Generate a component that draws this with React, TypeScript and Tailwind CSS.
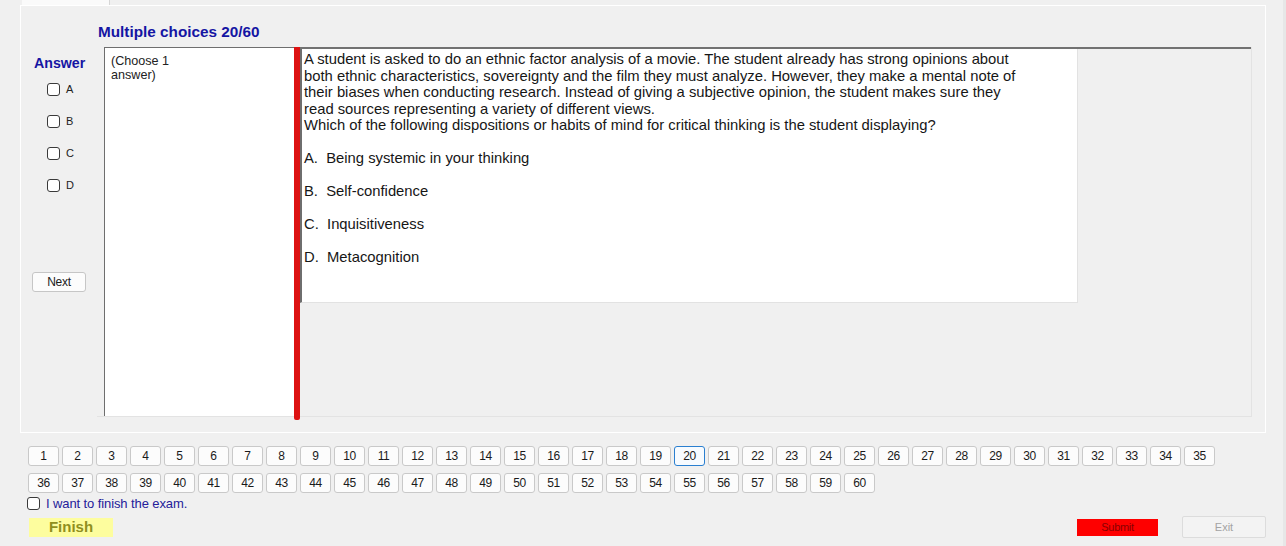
import React from "react";

const questionLines = [
  "A student is asked to do an ethnic factor analysis of a movie. The student already has strong opinions about",
  "both ethnic characteristics, sovereignty and the film they must analyze. However, they make a mental note of",
  "their biases when conducting research. Instead of giving a subjective opinion, the student makes sure they",
  "read sources representing a variety of different views.",
  "Which of the following dispositions or habits of mind for critical thinking is the student displaying?",
  "",
  "A.  Being systemic in your thinking",
  "",
  "B.  Self-confidence",
  "",
  "C.  Inquisitiveness",
  "",
  "D.  Metacognition",
];

function NumButton({ n }: { n: number }) {
  const active = n === 20;
  return (
    <div
      className={
        "w-[31px] h-[20px] flex items-center justify-center rounded-[3px] border text-[12px] text-[#1a1a1a] tracking-[-0.4px] " +
        (active ? "border-[#2a7fd0] bg-[#f7fbff]" : "border-[#c9c9c9] bg-[#fcfcfc]")
      }
    >
      {n}
    </div>
  );
}

function Box() {
  return <div className="w-[13px] h-[13px] rounded-[3px] border border-[#3a3a3a] bg-white shrink-0" />;
}

export default function App() {
  const row1 = Array.from({ length: 35 }, (_, i) => i + 1);
  const row2 = Array.from({ length: 25 }, (_, i) => i + 36);
  return (
    <div className="w-[1286px] h-[546px] bg-[#f0f0f0] overflow-hidden flex flex-col font-['Liberation_Sans',Arial,sans-serif] border-r-[3px] border-[#e7e7e7]">
      {/* tab strip */}
      <div className="h-[5px] flex shrink-0">
        <div className="ml-[22px] w-[88px] h-full bg-[#fafafa] border-r border-[#d6d6d6]" />
      </div>

      {/* tab page */}
      <div className="ml-[20px] w-[1246px] h-[428px] border border-white flex flex-col shrink-0">
        <div className="pt-[18px] pl-[77px] text-[15.3px] leading-[16px] font-bold text-[#1515a3]">
          Multiple choices 20/60
        </div>

        <div className="mt-[7px] flex h-[370px]">
          {/* left answer column */}
          <div className="w-[76px] flex flex-col shrink-0">
            <div className="mt-[8px] pl-[13px] text-[14.2px] leading-[16px] font-bold text-[#1515a3]">Answer</div>
            <div className="mt-[2px] flex flex-col">
              {["A", "B", "C", "D"].map((l) => (
                <div key={l} className="h-[32px] flex items-center pl-[26px] gap-[6px]">
                  <Box />
                  <span className="text-[11px] text-[#222]">{l}</span>
                </div>
              ))}
            </div>
            <div className="mt-[71px] ml-[11px] w-[54px] h-[20px] rounded-[3px] border border-[#c6c6c6] bg-[#fcfcfc] flex items-center justify-center text-[12px] text-[#1a1a1a] tracking-[-0.3px]">
              Next
            </div>
          </div>

          {/* content container */}
          <div className="w-[1155px] flex pl-[7px] border-b border-r border-[#e3e3e3]">
            <div className="w-[190px] bg-white border-t border-l border-[#6e6e6e] pt-[6px] pl-[6px] text-[12.6px] leading-[14px] text-[#222] shrink-0">
              (Choose 1
              <br />
              answer)
            </div>
            <div className="w-[6px] h-[373px] bg-[#dd1212] rounded-b-[2px] shrink-0" />
            <div className="flex-1 border-t-2 border-[#727272]">
              <div className="w-[778px] h-[254px] bg-white border-l-2 border-[#6e6e6e] border-r border-b border-r-[#e2e2e2] border-b-[#e2e2e2] pl-[2px] pt-[2px] text-[14.8px] leading-[16.5px] text-[#161616]">
                {questionLines.map((t, i) => (
                  <div key={i} className="whitespace-pre h-[16.5px]">
                    {t}
                  </div>
                ))}
              </div>
            </div>
          </div>
        </div>
      </div>

      {/* bottom area */}
      <div className="mt-[13px] pl-[28px] flex flex-col">
        <div className="flex gap-[3px]">
          {row1.map((n) => (
            <NumButton key={n} n={n} />
          ))}
        </div>
        <div className="mt-[7px] flex gap-[3px]">
          {row2.map((n) => (
            <NumButton key={n} n={n} />
          ))}
        </div>
        <div className="mt-[4px] h-[13px] flex items-center gap-[6px] -ml-[1px]">
          <Box />
          <span className="text-[13px] text-[#24209a] tracking-[-0.1px]">I want to finish the exam.</span>
        </div>
        <div className="mt-[7px] h-[20px] flex items-center pr-[17px]">
          <div className="ml-[1px] w-[84px] h-[19px] bg-[#fdfd9e] flex items-center justify-center text-[15px] font-bold text-[#8f8f1e]">
            Finish
          </div>
          <div className="flex-1" />
          <div className="w-[81px] h-[17px] bg-[#fe0000] flex items-center justify-center text-[11px] text-[#8a0000] tracking-[-0.3px]">
            Submit
          </div>
          <div className="ml-[24px] w-[84px] h-[22px] rounded-[2px] border border-[#dcdcdc] bg-[#f3f3f3] flex items-center justify-center text-[11px] text-[#a3a3a3]">
            Exit
          </div>
        </div>
      </div>
    </div>
  );
}
